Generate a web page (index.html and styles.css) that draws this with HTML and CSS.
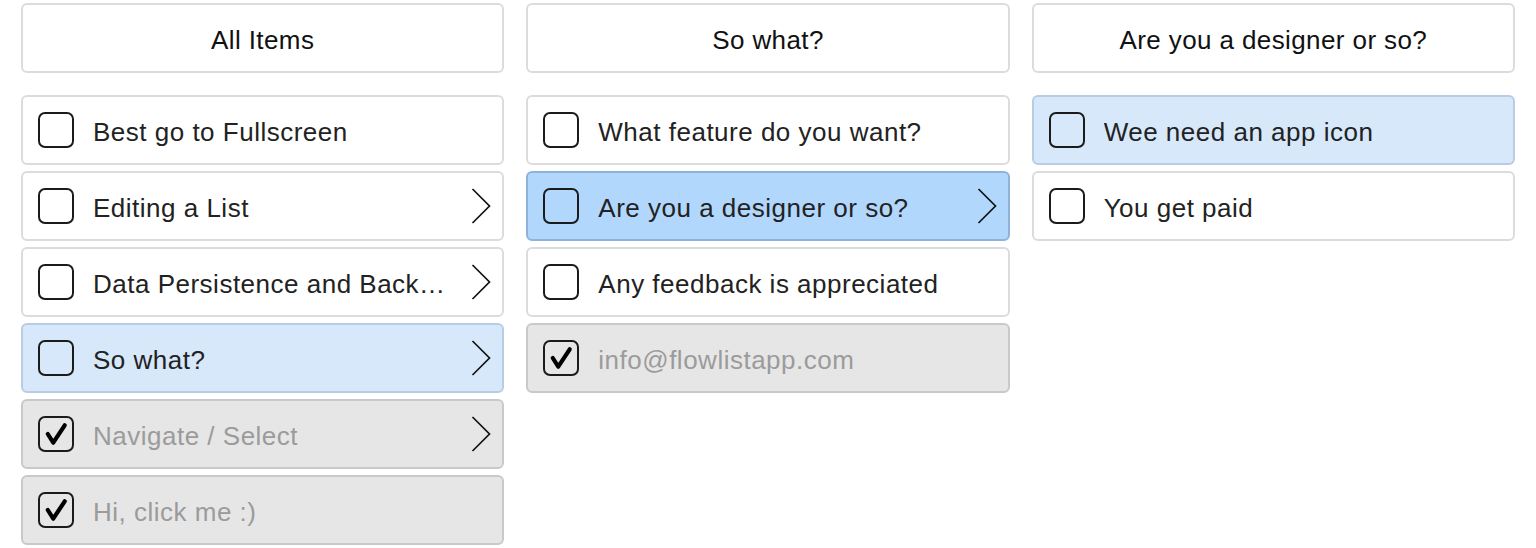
FILE: index.html
```html
<!DOCTYPE html>
<html lang="en">
<head>
    <meta charset="UTF-8">
    <title>Flow List</title>
    <link rel="stylesheet" href="styles.css">
</head>
<body>
    <div class="board">
        <!-- column 1 -->
        <div class="column">
            <div class="col-title">All Items</div>
            <ul class="items">
                <li class="item">
                    <span class="check"></span>
                    <span class="label">Best go to Fullscreen</span>
                </li>
                <li class="item">
                    <span class="check"></span>
                    <span class="label">Editing a List</span>
                    <svg class="chevron" viewBox="0 0 20 36"><polyline points="1.5,1 18.5,18 1.5,35"/></svg>
                </li>
                <li class="item">
                    <span class="check"></span>
                    <span class="label">Data Persistence and Back…</span>
                    <svg class="chevron" viewBox="0 0 20 36"><polyline points="1.5,1 18.5,18 1.5,35"/></svg>
                </li>
                <li class="item path">
                    <span class="check"></span>
                    <span class="label">So what?</span>
                    <svg class="chevron" viewBox="0 0 20 36"><polyline points="1.5,1 18.5,18 1.5,35"/></svg>
                </li>
                <li class="item done">
                    <span class="check"><svg viewBox="0 0 35 35"><path d="M8.5 17.5 L14.5 27 L27 8"/></svg></span>
                    <span class="label">Navigate / Select</span>
                    <svg class="chevron" viewBox="0 0 20 36"><polyline points="1.5,1 18.5,18 1.5,35"/></svg>
                </li>
                <li class="item done">
                    <span class="check"><svg viewBox="0 0 35 35"><path d="M8.5 17.5 L14.5 27 L27 8"/></svg></span>
                    <span class="label">Hi, click me :)</span>
                </li>
            </ul>
        </div>

        <!-- column 2 -->
        <div class="column">
            <div class="col-title">So what?</div>
            <ul class="items">
                <li class="item">
                    <span class="check"></span>
                    <span class="label">What feature do you want?</span>
                </li>
                <li class="item selected">
                    <span class="check"></span>
                    <span class="label">Are you a designer or so?</span>
                    <svg class="chevron" viewBox="0 0 20 36"><polyline points="1.5,1 18.5,18 1.5,35"/></svg>
                </li>
                <li class="item">
                    <span class="check"></span>
                    <span class="label">Any feedback is appreciated</span>
                </li>
                <li class="item done">
                    <span class="check"><svg viewBox="0 0 35 35"><path d="M8.5 17.5 L14.5 27 L27 8"/></svg></span>
                    <span class="label">info@flowlistapp.com</span>
                </li>
            </ul>
        </div>

        <!-- column 3 -->
        <div class="column">
            <div class="col-title">Are you a designer or so?</div>
            <ul class="items">
                <li class="item path">
                    <span class="check"></span>
                    <span class="label">Wee need an app icon</span>
                </li>
                <li class="item">
                    <span class="check"></span>
                    <span class="label">You get paid</span>
                </li>
            </ul>
        </div>
    </div>
</body>
</html>
```

FILE: styles.css
```css
body {
    margin: 0;
    background: #ffffff;
    font-family: "Liberation Sans", Arial, sans-serif;
    color: #222222;
}
.board {
    display: grid;
    grid-template-columns: 1fr 1fr 1fr;
    column-gap: 22px;
    padding: 3px 21px 0 21px;
}
.column {
    display: flex;
    flex-direction: column;
    gap: 22px;
}
.col-title {
    height: 70px;
    box-sizing: border-box;
    border: 2px solid #dcdcdc;
    border-radius: 6px;
    display: flex;
    align-items: center;
    justify-content: center;
    padding-top: 4px;
    font-size: 26px;
    letter-spacing: 0.4px;
    color: #111111;
}
.items {
    list-style: none;
    margin: 0;
    padding: 0;
    display: flex;
    flex-direction: column;
    gap: 6px;
}
.item {
    height: 70px;
    box-sizing: border-box;
    border: 2px solid #dcdcdc;
    border-radius: 6px;
    background: #ffffff;
    display: flex;
    align-items: center;
    padding: 0 11px 0 15px;
    font-size: 26px;
    letter-spacing: 0.5px;
}
.check {
    width: 36px;
    height: 36px;
    box-sizing: border-box;
    border: 2px solid #1b1b1b;
    border-radius: 7px;
    flex-shrink: 0;
    display: flex;
}
.check svg {
    width: 100%;
    height: 100%;
    fill: none;
    stroke: #000000;
    stroke-width: 4.6;
    stroke-linecap: round;
    stroke-linejoin: round;
}
.label {
    margin-left: 19px;
    padding-top: 4px;
    flex: 1;
    white-space: nowrap;
    overflow: hidden;
}
.chevron {
    width: 20px;
    height: 36px;
    flex-shrink: 0;
    fill: none;
    stroke: #111111;
    stroke-width: 1.7;
}
.item.path {
    background: #d7e8fb;
    border-color: #b8cde4;
}
.item.selected {
    background: #b2d7fd;
    border-color: #8eb2d8;
}
.item.done {
    background: #e6e6e6;
    border-color: #c9c9c9;
}
.item.done .label {
    color: #9b9b9b;
}
```
